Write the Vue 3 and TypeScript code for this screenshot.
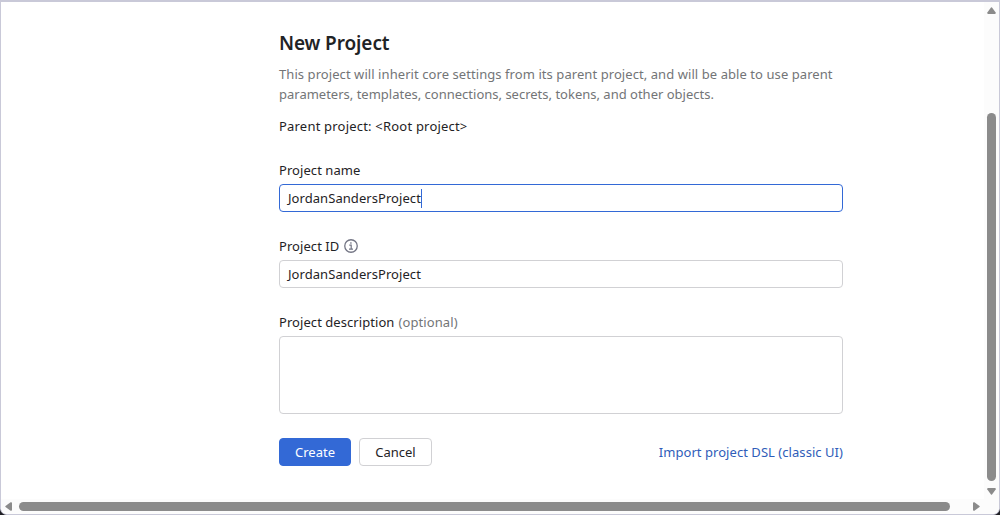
<script setup lang="ts">
import { ref } from 'vue'

const projectName = ref('JordanSandersProject')
const projectId = ref('JordanSandersProject')
const description = ref('')
</script>

<template>
  <div class="window">
    <main class="viewport">
      <form class="form" @submit.prevent>
        <h1>New Project</h1>
        <p class="intro">
          <span class="line-one">This project will inherit core settings from its parent project, and will be able to use parent</span><br />
          <span class="line-two">parameters, templates, connections, secrets, tokens, and other objects.</span>
        </p>
        <p class="parent">Parent project: &lt;Root project&gt;</p>

        <label class="label">Project name</label>
        <div class="input focused"><span>{{ projectName }}</span><i class="caret"></i></div>

        <label class="label">
          <span>Project ID</span>
          <svg class="info" width="14" height="14" viewBox="0 0 14 14" fill="none">
            <circle cx="7" cy="7" r="6.25" stroke="#737584" stroke-width="1.3" />
            <path d="M5.3 6.2H7.2V10M5 10.1H9" stroke="#737584" stroke-width="1.2" />
            <rect x="6.2" y="3.3" width="1.4" height="1.4" fill="#737584" />
          </svg>
        </label>
        <div class="input"><span>{{ projectId }}</span></div>

        <label class="label description-label"><span>Project description</span><span class="optional">(optional)</span></label>
        <div class="textarea">{{ description }}</div>

        <div class="actions">
          <button class="button primary" type="submit">Create</button>
          <button class="button" type="button">Cancel</button>
          <a class="import">Import project DSL (classic UI)</a>
        </div>
      </form>
    </main>

    <div class="vbar">
      <svg class="up" width="9" height="7" viewBox="0 0 9 7"><path d="M4 .5Q4.5 0 5 .5L8.7 5.6Q9 7 8 7H1Q0 7 .3 5.6Z" fill="#8b8b8b" /></svg>
      <div class="vthumb"></div>
      <svg class="down" width="9" height="7" viewBox="0 0 9 7"><path d="M4 6.5Q4.5 7 5 6.5L8.7 1.4Q9 0 8 0H1Q0 0 .3 1.4Z" fill="#8b8b8b" /></svg>
    </div>
    <div class="hbar">
      <svg class="left" width="7" height="9" viewBox="0 0 7 9"><path d="M.5 4Q0 4.5 .5 5L5.6 8.7Q7 9 7 8V1Q7 0 5.6 .3Z" fill="#8b8b8b" /></svg>
      <div class="hthumb"></div>
      <svg class="right" width="7" height="9" viewBox="0 0 7 9"><path d="M6.5 4Q7 4.5 6.5 5L1.4 8.7Q0 9 0 8V1Q0 0 1.4 .3Z" fill="#8b8b8b" /></svg>
    </div>
  </div>
</template>

<style>
html, body { margin: 0; background: #1f1f24; overflow: hidden; }
</style>

<style scoped>
.window {
  box-sizing: border-box;
  height: 515px;
  display: grid;
  grid-template-columns: minmax(0, 1fr) 15px;
  grid-template-rows: minmax(0, 1fr) 15px;
  border: 1px solid #c9c9d8;
  border-top-width: 2px;
  border-radius: 0 0 7px 7px;
  background: #fff;
  color: #1f2326;
  font: 13px/20px "Noto Sans", "Open Sans", sans-serif;
  overflow: hidden;
}
.viewport { overflow: hidden; }
.form { width: 564px; margin: 27px 0 0 278px; }
h1 { margin: 0; font-size: 19px; line-height: 28px; font-weight: 600; letter-spacing: -0.1px; }
p { margin: 0; white-space: nowrap; }
.intro { margin-top: 7px; color: #737577; }
.line-one { letter-spacing: 0.07px; }
.parent { margin: 12px 0 24px; letter-spacing: 0.2px; }
.label { display: flex; align-items: center; height: 20px; margin-bottom: 4px; white-space: nowrap; letter-spacing: 0.06px; }
.input {
  box-sizing: border-box;
  height: 28px;
  margin-bottom: 24px;
  padding: 0 8px;
  display: flex;
  align-items: center;
  border: 1px solid #d1d1d4;
  border-radius: 4px;
  letter-spacing: 0.06px;
}
.focused { border-color: #3369d6; }
.caret { width: 1px; height: 19px; background: #3369d6; }
.info { margin-left: 5px; }
.optional { margin-left: 4px; color: #737577; letter-spacing: 0.1px; }
.textarea { box-sizing: border-box; height: 78px; border: 1px solid #d1d1d4; border-radius: 4px; }
.actions { display: flex; align-items: center; margin-top: 24px; }
.button {
  box-sizing: border-box;
  width: 73px;
  height: 28px;
  padding: 0;
  border: 1px solid #d1d1d4;
  border-radius: 4px;
  background: #fff;
  color: inherit;
  font: inherit;
}
.primary { width: 72px; margin-right: 8px; border-color: #3369d6; background: #3369d6; color: #fff; }
.import { margin-left: auto; color: #2f5db9; white-space: nowrap; letter-spacing: 0.05px; }
.vbar { display: flex; flex-direction: column; align-items: center; background: #fcfcfc; }
.up { margin-top: 5px; }
.vthumb { width: 9px; height: 368px; margin-top: 99px; border-radius: 5px; background: #8b8b8b; }
.down { margin-top: 7px; }
.hbar { grid-column: 1 / 3; display: flex; align-items: center; background: #fcfcfc; }
.left { margin-left: 4px; }
.hthumb { width: 931px; height: 9px; margin-left: 7px; border-radius: 5px; background: #8b8b8b; }
.right { margin-left: 23px; }
</style>
